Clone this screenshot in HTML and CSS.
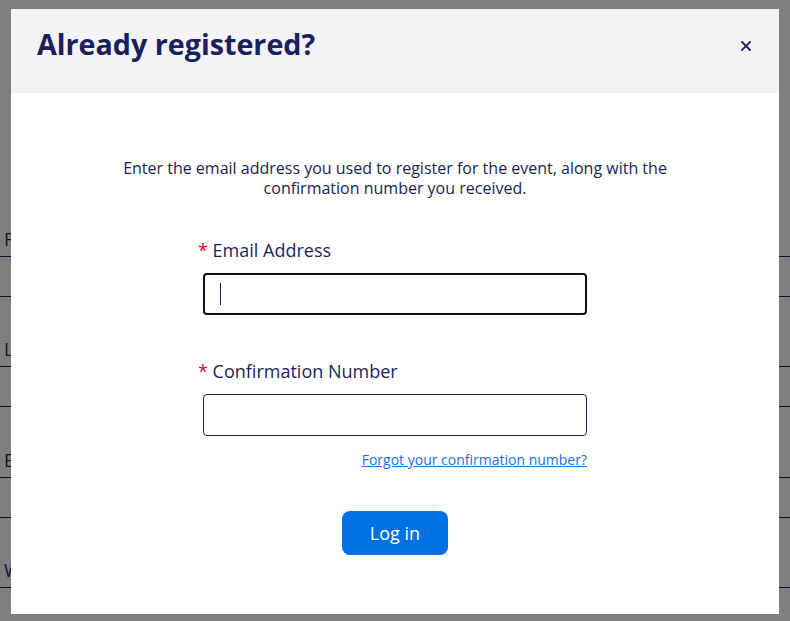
FILE: index.html
```html
<!DOCTYPE html>
<html lang="en">
<head>
<meta charset="utf-8">
<title>Already registered?</title>
<link rel="stylesheet" href="styles.css">
</head>
<body>
<main class="page">
  <div class="bg-field"><div class="bg-label">First Name</div><div class="bg-input"></div></div>
  <div class="bg-field"><div class="bg-label">Last Name</div><div class="bg-input"></div></div>
  <div class="bg-field"><div class="bg-label">Email Address</div><div class="bg-input"></div></div>
  <div class="bg-field"><div class="bg-label">Work Phone</div><div class="bg-input"></div></div>
</main>
<div class="overlay">
  <section class="modal" role="dialog" aria-labelledby="dlg-title">
    <header class="modal-header">
      <h1 id="dlg-title" class="modal-title">Already registered?</h1>
      <button class="close-btn" aria-label="Close">
        <svg width="10" height="10" viewBox="0 0 10 10"><path d="M1 1L9 9M9 1L1 9" stroke="#1b1f5e" stroke-width="1.8" stroke-linecap="square"/></svg>
      </button>
    </header>
    <div class="modal-body">
      <p class="intro">Enter the email address you used to register for the event, along with the confirmation number you received.</p>
      <form class="login-form">
        <div class="field">
          <label class="field-label" for="email"><span class="req">*</span> Email Address</label>
          <div class="input-wrap focused"><input id="email" class="text-input" type="text"></div>
        </div>
        <div class="field">
          <label class="field-label" for="conf"><span class="req">*</span> Confirmation Number</label>
          <div class="input-wrap"><input id="conf" class="text-input" type="text"></div>
        </div>
        <div class="forgot-row"><a class="forgot" href="#">Forgot your confirmation number?</a></div>
        <div class="actions"><button type="button" class="login-btn">Log in</button></div>
      </form>
    </div>
  </section>
</div>
</body>
</html>
```

FILE: styles.css
```css
* { box-sizing: border-box; }
html, body { margin: 0; padding: 0; }
body {
  font-family: "Open Sans", "Liberation Sans", sans-serif;
  background: #ffffff;
  color: #1b1f5e;
  width: 790px;
  height: 621px;
  overflow: hidden;
}
.page {
  padding-top: 227px;
  display: flex;
  flex-direction: column;
  gap: 40.3px;
}
.bg-label {
  font-size: 18px;
  line-height: 24px;
  padding-left: 4px;
  margin-bottom: 5px;
  color: #1b1f5e;
}
.bg-input {
  height: 41px;
  border-top: 1px solid #1b1f5e;
  border-bottom: 1px solid #1b1f5e;
}
.overlay {
  position: fixed;
  inset: 0;
  background: rgba(0, 0, 0, 0.5);
  display: flex;
  padding: 9px 11px 7px 11px;
}
.modal {
  flex: 1;
  background: #ffffff;
  display: flex;
  flex-direction: column;
}
.modal-header {
  height: 84px;
  background: #f3f3f3;
  display: flex;
  align-items: flex-start;
  justify-content: space-between;
  padding: 0 28px 0 26px;
}
.modal-title {
  margin: 15px 0 0 0;
  font-size: 28.7px;
  line-height: 40px;
  font-weight: 700;
  color: #1b1f5e;
}
.close-btn {
  margin-top: 32px;
  background: none;
  border: 0;
  padding: 0;
  width: 10px;
  height: 10px;
  display: flex;
}
.modal-body {
  padding-top: 65px;
  display: flex;
  flex-direction: column;
  align-items: center;
}
.intro {
  margin: 0;
  width: 560px;
  text-align: center;
  font-size: 16px;
  line-height: 20px;
  color: #1b1f4e;
}
.login-form {
  width: 384px;
  margin-top: 40px;
  display: flex;
  flex-direction: column;
}
.field { display: flex; flex-direction: column; }
.field + .field { margin-top: 44px; }
.field-label {
  font-size: 18px;
  line-height: 24px;
  margin-left: -5px;
  margin-bottom: 11px;
  color: #1b1f5e;
}
.req { color: #c8102e; }
.input-wrap { position: relative; }
.text-input {
  display: block;
  width: 100%;
  height: 42px;
  border: 1px solid #1b1f5e;
  border-radius: 4px;
  font: inherit;
  padding: 0 16px;
  outline: none;
  background: #fff;
}
.input-wrap.focused .text-input {
  border: 2px solid #111111;
}
.input-wrap.focused::after {
  content: "";
  position: absolute;
  left: 17px;
  top: 10px;
  width: 1px;
  height: 22px;
  background: #1b1f5e;
}
.forgot-row {
  display: flex;
  justify-content: flex-end;
  margin-top: 15px;
}
.forgot {
  font-size: 14px;
  line-height: 18px;
  color: #1a6fdb;
  text-decoration: underline;
}
.actions {
  display: flex;
  justify-content: center;
  margin-top: 42px;
}
.login-btn {
  width: 106px;
  height: 44px;
  border: 0;
  border-radius: 8px;
  background: #0070e3;
  color: #ffffff;
  font-family: inherit;
  font-size: 18px;
}
```
